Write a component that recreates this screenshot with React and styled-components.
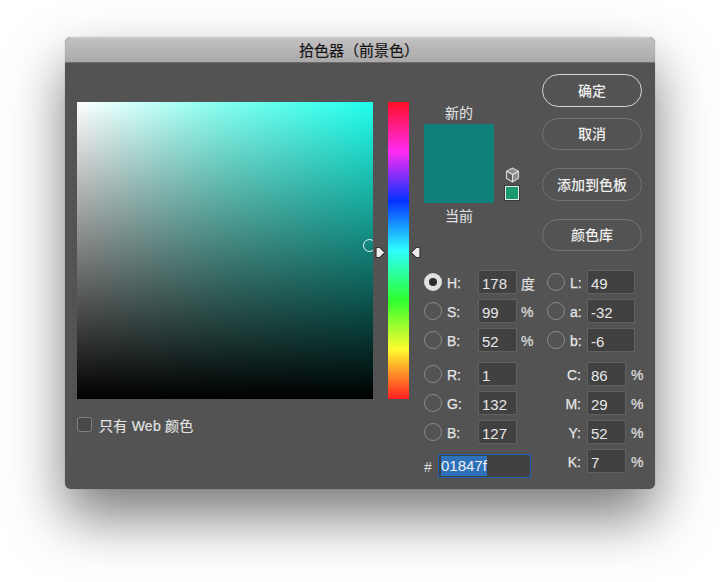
import React from 'react';
import styled, { createGlobalStyle } from 'styled-components';

const Global = createGlobalStyle`
  html, body { margin: 0; padding: 0; background: #fff; }
  body { width: 720px; height: 582px; overflow: hidden; font-family: "Liberation Sans", "Noto Sans CJK SC", sans-serif; }
`;
const Scene = styled.div`
  padding: 37px 65px 0;
  height: 582px;
  box-sizing: border-box;
`;
const Dialog = styled.div`
  width: 590px;
  height: 452px;
  border-radius: 6px;
  background: #535353;
  overflow: hidden;
  display: flex;
  flex-direction: column;
  box-shadow: 0 28px 56px rgba(0,0,0,.52), 0 0 1px rgba(0,0,0,.4);
`;
const TitleBar = styled.div`
  height: 26px;
  box-sizing: border-box;
  flex: none;
  display: flex;
  align-items: center;
  justify-content: center;
  padding-bottom: 2px;
  padding-right: 2px;
  background: linear-gradient(#c4c1c2, #aba8aa);
  border-top: 1px solid #d0cdce;
  border-bottom: 1px solid #6f6e6f;
  color: #141414;
  font: 15px "Noto Sans CJK SC", sans-serif;
  -webkit-text-stroke: 0.2px #141414;
`;
const Body = styled.div`
  flex: 1;
  display: flex;
  padding: 11px 13px 0 12px;
`;
const LeftColumn = styled.div`
  padding-top: 28px;
  width: 296px;
`;
const Field = styled.div`
  position: relative;
  width: 296px;
  height: 297px;
  overflow: hidden;
  background:
    linear-gradient(to bottom, rgba(0,0,0,0), #000),
    linear-gradient(to right, #fff, #82fff0 50%, #20ffec);
`;
const FieldMarker = styled.div`
  position: absolute;
  left: 286px;
  top: 137px;
  width: 11px;
  height: 11px;
  border: 1.5px solid #e8f4f2;
  border-radius: 50%;
`;
const WebRow = styled.label`
  display: flex;
  align-items: center;
  gap: 7px;
  margin-top: 17px;
  height: 17px;
  color: #e2e2e2;
  font: 14px "Liberation Sans", "Noto Sans CJK SC", sans-serif;
  letter-spacing: 0.25px;
  -webkit-text-stroke: 0.2px #e2e2e2;
`;
const Checkbox = styled.span`
  width: 13px;
  height: 13px;
  border: 1.5px solid #808080;
  border-radius: 3px;
  background: #484848;
`;
const HueColumn = styled.div`
  margin: 28px 0 0 15px;
  position: relative;
  width: 21px;
  height: 297px;
  background: linear-gradient(to bottom, #ff0f25 0%, #ff2bf3 16.67%, #0432ff 33.33%, #2cfffd 50%, #2dff2e 66.67%, #fffb30 83.33%, #ff1f20 100%);
`;
const Arrow = styled.svg`
  position: absolute;
  top: 144px;
  width: 11px;
  height: 13px;
  ${p => (p.$side === 'left' ? 'left: -13px;' : 'right: -12px;')}
`;
const RightColumn = styled.div`
  margin-left: 15px;
  width: 218px;
  display: flex;
  flex-direction: column;
  gap: 19px;
`;
const TopArea = styled.div`
  display: flex;
  justify-content: space-between;
  height: 177px;
`;
const PreviewArea = styled.div`
  display: flex;
`;
const Preview = styled.div`
  padding-top: 28px;
  width: 70px;
  display: flex;
  flex-direction: column;
  align-items: center;
`;
const PreviewLabel = styled.div`
  height: 22px;
  color: #dedede;
  font: 14px/20px "Noto Sans CJK SC", sans-serif;
  -webkit-text-stroke: 0.15px #dedede;
`;
const Swatch = styled.div`
  width: 70px;
  height: 79px;
  flex: none;
  background: #10807a;
  margin-bottom: 2px;
`;
const Gamut = styled.div`
  margin: 93px 0 0 10px;
  width: 16px;
  display: flex;
  flex-direction: column;
  align-items: center;
  gap: 3px;
`;
const GamutSwatch = styled.div`
  width: 12px;
  height: 12px;
  background: #169b6c;
  border: 1.5px solid #ececec;
  box-shadow: 0 0 0 1px #3a3a3a;
`;
const Buttons = styled.div`
  width: 100px;
  display: flex;
  flex-direction: column;
`;
const Button = styled.button`
  width: 100px;
  height: 33px;
  padding: 0 0 1px;
  margin-top: ${p => p.$gap}px;
  border-radius: 17px;
  background: transparent;
  border: 1px solid ${p => (p.$primary ? '#d8d8d8' : '#727272')};
  color: #f0f0f0;
  font: 500 14px "Noto Sans CJK SC", sans-serif;
`;
const Fields = styled.div`
  display: flex;
`;
const FieldColumn = styled.div`
  display: flex;
  flex-direction: column;
  width: ${p => p.$width}px;
  gap: 10px;
`;
const Group = styled.div`
  display: flex;
  flex-direction: column;
  gap: 5px;
`;
const Row = styled.div`
  display: flex;
  align-items: center;
  height: 24px;
`;
const Radio = styled.span`
  box-sizing: border-box;
  flex: none;
  width: 18px;
  height: 18px;
  border-radius: 50%;
  border: 1.5px solid #8a8a8a;
  margin-right: 5px;
  ${p => p.$on && `
    border: 5.5px solid #e0e0e0;
    background: #2c2c2c;
  `}
`;
const Label = styled.span`
  width: ${p => p.$width}px;
  flex: none;
  padding-top: 2px;
  color: #e6e6e6;
  font-size: 14px;
  -webkit-text-stroke: 0.25px #e6e6e6;
  text-align: ${p => p.$align || 'left'};
`;
const Input = styled.div`
  box-sizing: border-box;
  flex: none;
  width: ${p => p.$width || 39}px;
  margin-left: ${p => p.$offset || 0}px;
  height: 24px;
  line-height: 25px;
  padding-left: 3px;
  background: #414141;
  border: 1px solid #606060;
  color: #e8e8e8;
  font-size: 15px;
`;
const Unit = styled.span`
  margin-left: ${p => p.$gap || 4}px;
  padding-top: 2px;
  color: #e0e0e0;
  font: 14px "Liberation Sans", "Noto Sans CJK SC", sans-serif;
  -webkit-text-stroke: 0.2px #e0e0e0;
`;
const Hash = styled.span`
  width: 14px;
  flex: none;
  padding-top: 2px;
  color: #dcdcdc;
  font-size: 14px;
`;
const HexInput = styled.div`
  box-sizing: border-box;
  width: 93px;
  height: 24px;
  line-height: 20px;
  padding: 1px 2px;
  background: #414141;
  border: 1px solid #1d62b8;
  color: #f0f0f0;
  font-size: 15px;
`;
const Selected = styled.span`
  display: inline-block;
  height: 20px;
  background: #2f72bc;
`;

const hsb = [['H:', '178', '度', true], ['S:', '99', '%'], ['B:', '52', '%']];
const rgb = [['R:', '1'], ['G:', '132'], ['B:', '127']];
const lab = [['L:', '49'], ['a:', '-32'], ['b:', '-6']];
const cmyk = [['C:', '86'], ['M:', '29'], ['Y:', '52'], ['K:', '7']];

const Cube = () => (
  <svg width="15" height="16" viewBox="0 0 15 16" fill="none">
    <path d="M7.5 1 L13.5 4.2 V11.3 L7.5 15 L1.5 11.3 V4.2 Z" fill="#8d8d8d" stroke="#cfcfcf" strokeWidth="1.2" strokeLinejoin="round" />
    <path d="M1.5 4.2 L7.5 7.6 L13.5 4.2 M7.5 7.6 V15" stroke="#e4e4e4" strokeWidth="1.1" />
    <path d="M2.4 5.4 L6.9 8 V13.7 L2.4 10.9 Z" fill="#5b5b5b" />
  </svg>
);

const HueArrow = ({ side }) => (
  <Arrow $side={side} viewBox="0 0 11 13">
    <path
      d={side === 'left' ? 'M2 1.5 H5 L10 6.5 L5 11.5 H2 Q1 11.5 1 10.5 V2.5 Q1 1.5 2 1.5 Z' : 'M9 1.5 H6 L1 6.5 L6 11.5 H9 Q10 11.5 10 10.5 V2.5 Q10 1.5 9 1.5 Z'}
      fill="#ececec"
      stroke="#333"
      strokeWidth="1.2"
    />
  </Arrow>
);

export default function App() {
  return (
    <Scene>
      <Global />
      <Dialog>
        <TitleBar>拾色器（前景色）</TitleBar>
        <Body>
          <LeftColumn>
            <Field><FieldMarker /></Field>
            <WebRow><Checkbox />只有 Web 颜色</WebRow>
          </LeftColumn>
          <HueColumn>
            <HueArrow side="left" />
            <HueArrow side="right" />
          </HueColumn>
          <RightColumn>
            <TopArea>
              <PreviewArea>
                <Preview>
                  <PreviewLabel>新的</PreviewLabel>
                  <Swatch />
                  <PreviewLabel>当前</PreviewLabel>
                </Preview>
                <Gamut>
                  <Cube />
                  <GamutSwatch />
                </Gamut>
              </PreviewArea>
              <Buttons>
                <Button $primary $gap={0}>确定</Button>
                <Button $gap={11}>取消</Button>
                <Button $gap={18}>添加到色板</Button>
                <Button $gap={18}>颜色库</Button>
              </Buttons>
            </TopArea>
            <Fields>
              <FieldColumn $width={123}>
                <Group>
                  {hsb.map(([l, v, u, on]) => (
                    <Row key={l}>
                      <Radio $on={on} /><Label $width={31}>{l}</Label><Input>{v}</Input><Unit>{u}</Unit>
                    </Row>
                  ))}
                </Group>
                <Group>
                  {rgb.map(([l, v]) => (
                    <Row key={l}>
                      <Radio /><Label $width={31}>{l}</Label><Input>{v}</Input>
                    </Row>
                  ))}
                </Group>
                <Row>
                  <Hash>#</Hash>
                  <HexInput><Selected>01847f</Selected></HexInput>
                </Row>
              </FieldColumn>
              <FieldColumn $width={95}>
                <Group>
                  {lab.map(([l, v]) => (
                    <Row key={l}>
                      <Radio /><Label $width={17}>{l}</Label><Input $width={48}>{v}</Input>
                    </Row>
                  ))}
                </Group>
                <Group>
                  {cmyk.map(([l, v]) => (
                    <Row key={l}>
                      <Label $width={34} $align="right">{l}</Label>
                      <Input $offset={6}>{v}</Input>
                      <Unit $gap={5}>%</Unit>
                    </Row>
                  ))}
                </Group>
              </FieldColumn>
            </Fields>
          </RightColumn>
        </Body>
      </Dialog>
    </Scene>
  );
}
